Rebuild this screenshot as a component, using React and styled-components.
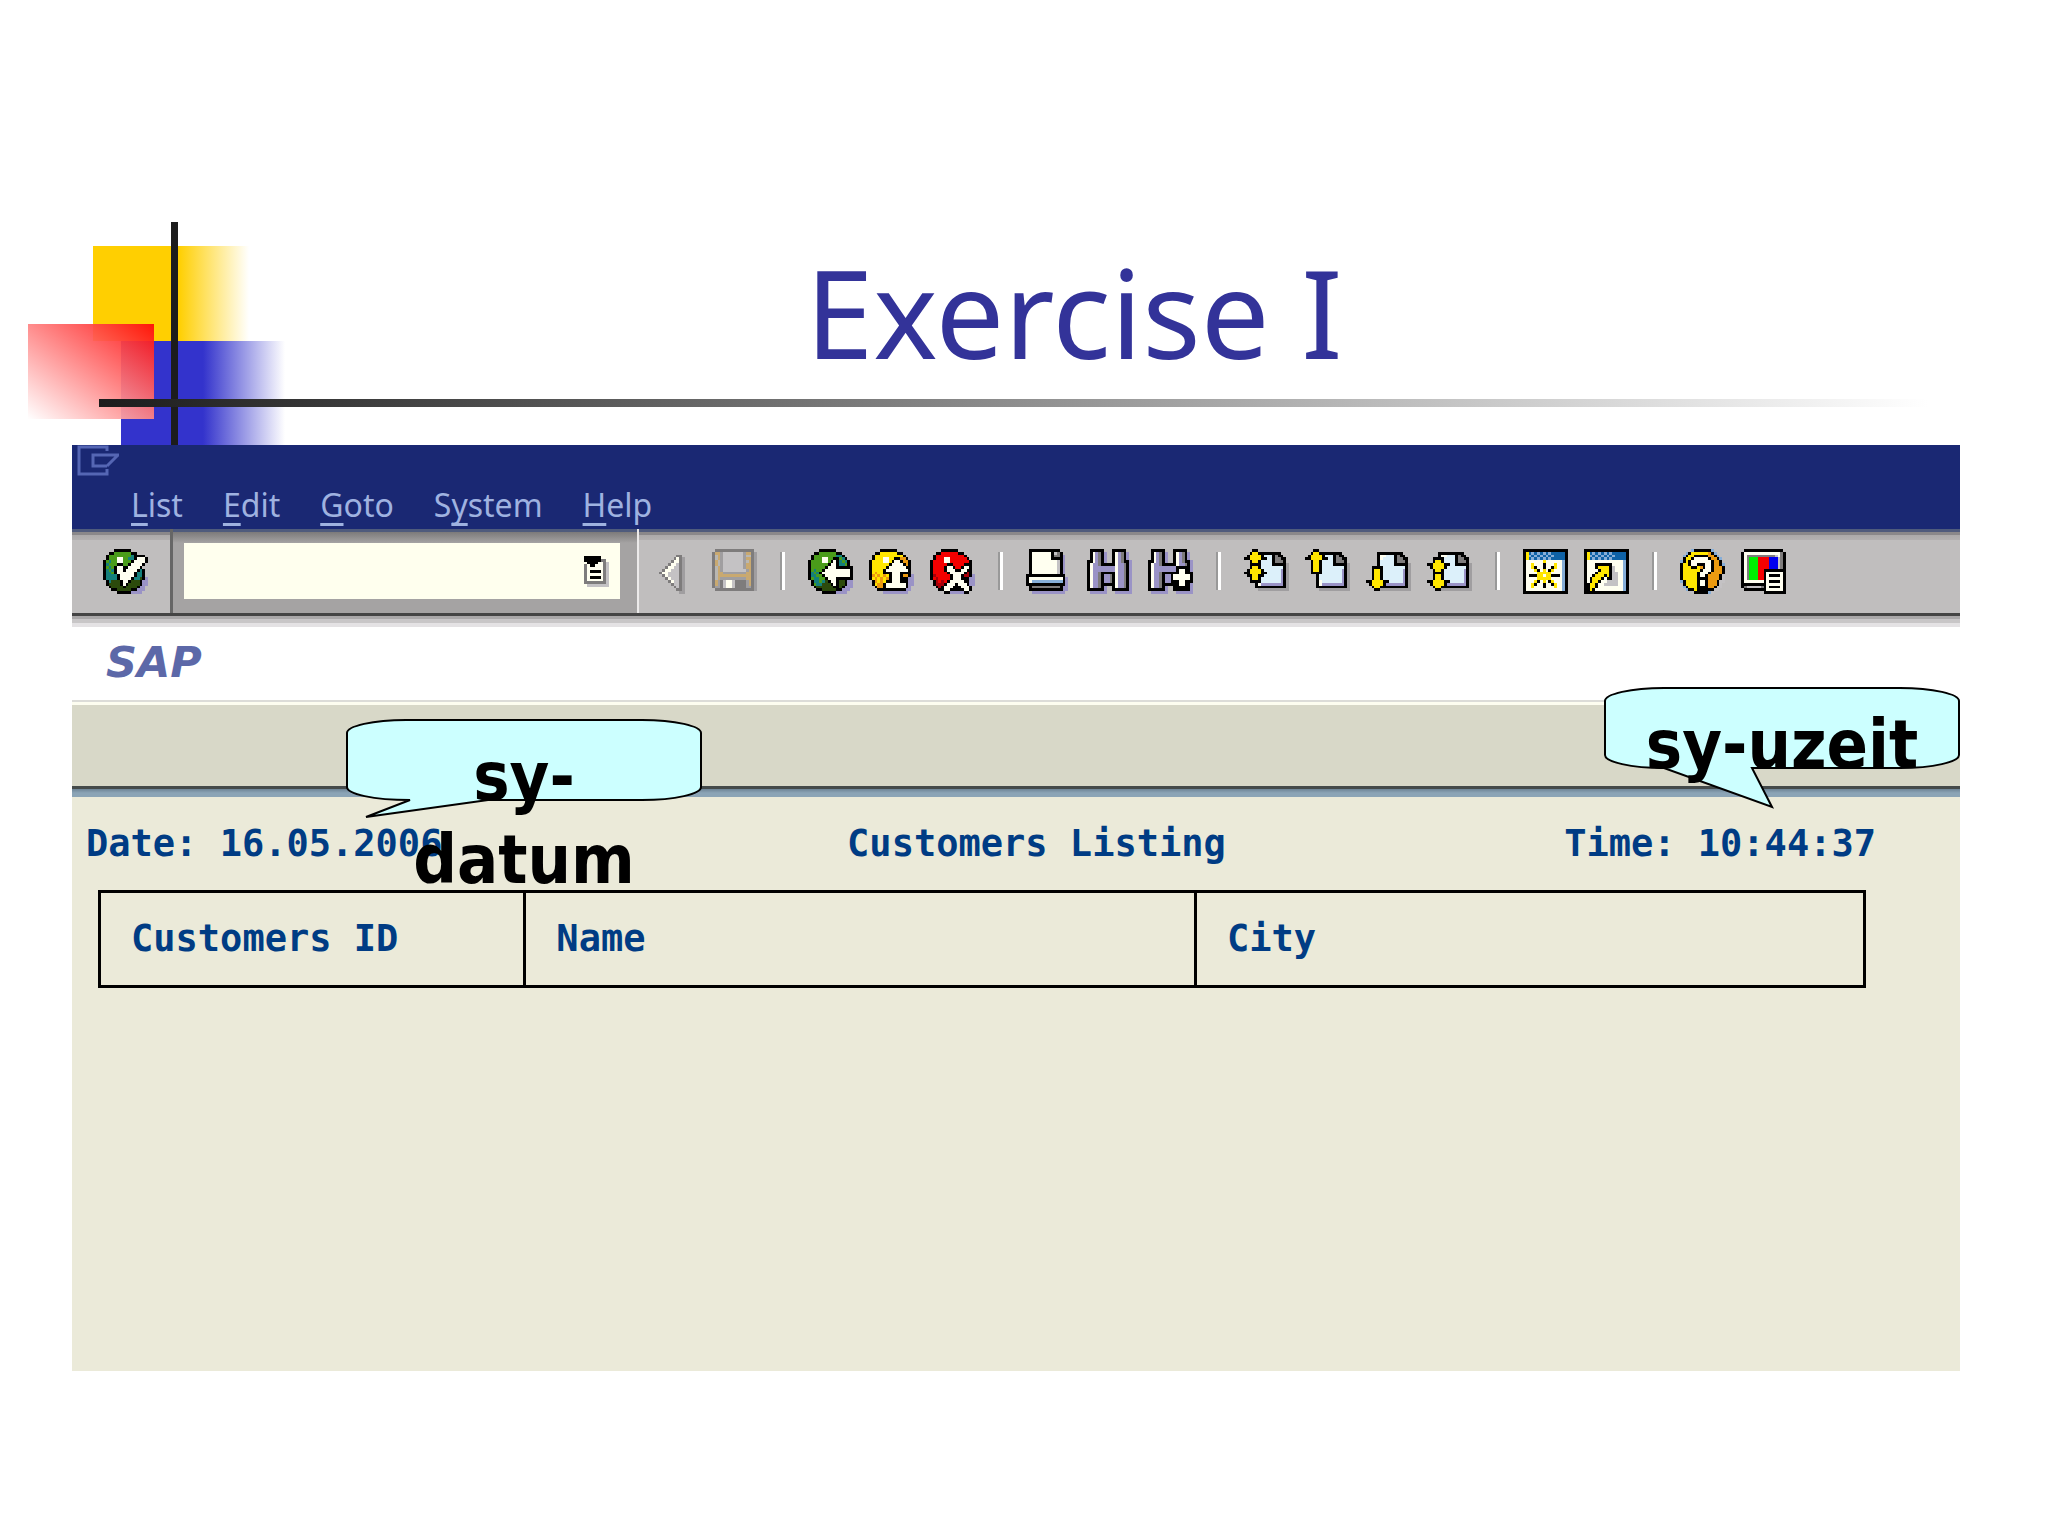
import React from "react";
import styled, { createGlobalStyle } from "styled-components";

// ------------- PIXEL ICONS -------------
// every icon is one or more layers of text rows, one letter per pixel
const palette = {
    K: "#000000",
    W: "#fffff0",
    G: "#4a9c1a",
    D: "#2c4a0c",
    T: "#14807c",
    L: "#9a93c6",
    Y: "#ffe600",
    O: "#ec9a10",
    R: "#f40000",
    r: "#a80008",
    N: "#00f000",
    U: "#0000f0",
    B: "#0f62a6",
    b: "#86aed8",
    i: "#dcf0fa",
    g: "#7e7c7c",
    s: "#c4c2c4",
    h: "#a09ea0",
    t: "#c9a970",
    e: "#b9b7b2",
};

const check = [
    "....KKKKKK......",
    "..KKGGGGGGKK....",
    ".KGGGGGGGGTKKKK.",
    ".KGGGWWGGTTKWWWK",
    "KGTGGWWGGGKWWWWK",
    "KTGGGKKGGKWWWWK.",
    "KGTGKWWKKWWWWK..",
    "KTGTKWWKWWWWKTK.",
    "KTTGKWWWWWWKTTK.",
    "KTTTTKWWWWWKTTK.",
    "KTTTTKWWWWKTTDKL",
    ".KTDDDKWWKDDDKLL",
    ".KDDDDKWKDDDDKLL",
    "..KDDDDKDDDDKLL.",
    "...KKDDDDDKKLLL.",
    ".....KKKKKLLLL..",
];

const back = [
    "....KKKKKK......",
    "..KKGGGGGGKK....",
    ".KGGGGGGGGTTK...",
    ".KGGGWWGGKKGTK..",
    "KGGGGWWGKWKTGTK.",
    "KGGGGGGKWWKTTGK.",
    "KGGGGGKWWWKKKKKK",
    "KGTGGKWWWWWWWWWK",
    "KTGTKWWWWWWWWWWK",
    "KTTGGKWWWWWWWWWK",
    "KGTTGGKWWWKKKKKK",
    ".KTTGTDKWWKDDKLL",
    ".KGTTDDDKWKDDKLL",
    "..KDDDDDDKKDKLLL",
    "...KKDDDDDKKLLL.",
    ".....KKKKKLLLL..",
];

const exit = [
    "....KKKKKK......",
    "..KKYYYYYYKK....",
    ".KYYYYYYYYYYK...",
    ".KYYYWWYYKKOOK..",
    "KYYYYWWYKWWKOOK.",
    "KYYYYYYKWWWWKOK.",
    "KYYYYYKWWWWWWKK.",
    "KYYYYKWWWWWWWWK.",
    "KYOYYKKKWWWKKKK.",
    "KOYOYOYKWWWKOOKL",
    "KYOYOYOKWWWKKKLL",
    ".KOYOYKKWWWKKKLL",
    ".KYOOKWWWWWWWKLL",
    "..KOOKWWWWWWWKL.",
    "...KKKKKKKKKKLL.",
    ".....LLLLLLLLL..",
];

const cancel = [
    "....KKKKKK......",
    "..KKRRRRRRKK....",
    ".KRRRRRRRRRRK...",
    ".KRRRWWRRRRRRK..",
    "KRRRRWWRRRRRRRK.",
    "KRRRRRKKRRRRKKK.",
    "KRRRRKWWKRRKWWK.",
    "KRRRRKWWWKKWWKK.",
    "KRRRRRKWWWWWKrK.",
    "KrRRRRRKWWWKrrKL",
    "KRrRRRRKWWWKKKLL",
    ".KrRrRKWWWWWKKLL",
    ".KrrrKWWWKWWWKLL",
    "..KrKWWWKKKWWWK.",
    "...KKWWKKKKKWWK.",
    ".....KKLLLLLKK..",
];

const triangle = [
    "................",
    "................",
    ".........gg.....",
    "........gWgh....",
    ".......gWWgh....",
    "......gWWsgh....",
    ".....gWWssgh....",
    "....gWWsssgh....",
    "...gWWssssgh....",
    "....gWssssgh....",
    ".....gWsssgh....",
    "......gWssgh....",
    ".......gssgh....",
    "........gsgh....",
    ".........ggh....",
    "..........hh....",
];

const save = [
    ".gggggggggggggg.",
    "gtthssssssshttgh",
    "gethsssssssheegh",
    "gethssssssshttgh",
    "gtehssssssshetgh",
    "gtehssssssshttgh",
    "gethssssssshttgh",
    "gethsssssssshtgh",
    "getthhhhhhhhttgh",
    "gettttttttttttgh",
    "gethhhhhhhhhttgh",
    "gthgsWWsgggghtgh",
    "gthgsWWsgggghtgh",
    "ghhgsWWsgggghhgh",
    ".ggggggggggggggh",
    "................",
];

const print = [
    ".KKKKKKKKKKK....",
    ".KWWWWWWWKsgK...",
    ".KWWWWWWWKggKL..",
    ".KWWWWWWWKKKKL..",
    ".KWWWWWWWWWsKL..",
    ".KWWWWWWWWWsKL..",
    ".KWWWWWWWWWsKL..",
    ".KWWWWWWWWWsKL..",
    ".KWWWWWWWWWsKL..",
    "KKKKKKKKKKKKKK..",
    "KWWWWWWWWWWWWKL.",
    "KWbbbbbbbbbbbKL.",
    "KKKKKKKKKKKKKKL.",
    ".KggggggggggKLL.",
    ".KKKKKKKKKKKKLL.",
    "..LLLLLLLLLLLL..",
];

const find = [
    ".KKKKK...KKKKK..",
    ".KWLgKL..KWLgKL.",
    ".KWLgKL..KWLgKL.",
    ".KWLgKL..KWLgKL.",
    "KKWLgKL..KWLgKKL",
    "KWLLgKKKKKWLLgKL",
    "KWLLLLLLLLWLLgKL",
    "KWLLLLLLLLWLLgKL",
    "KWLLgKKKKKWLLgKL",
    "KWLLgKLLgKWLLgKL",
    "KWLLgKLLgKWLLgKL",
    "KWLLgKLLgKWLLgKL",
    "KWLLgKKKKKWLLgKL",
    "KWLLgKL..KWLLgKL",
    "KKKKKKL..KKKKKKL",
    ".LLLLLL...LLLLLL",
];

const plus = [
    "", "", "", "", "", "",
    "..........KKKK..",
    "..........KWWK..",
    ".........KKWWKKK",
    "........KWWWWWWK",
    "........KWWWWWWK",
    "........KKKWWKKK",
    ".........KKWWKKL",
    ".........KKKKKKL",
];

const sheet = [
    "",
    "....KKKKKKKKK...",
    "....KWWiiiKgKK..",
    "....KWiiiiKggKK.",
    "....KiiiiiKgggK.",
    "....KiiiiiKKKKKh",
    "....KiiiiiiiiiKh",
    "....KiiiiiiiiLKh",
    "....KiiiiiiiiLKh",
    "....KiiiiiiiiLKh",
    "....KiiiiiiiiLKh",
    "....KWiiiiiiiLKh",
    "....KWLLLLLLLLKh",
    "....KKKKKKKKKKKh",
    ".....hhhhhhhhhhh",
];

const twoUp = [
    "...KK...",
    "..KYYK..",
    ".KYYYYK.",
    "KKYYYYKK",
    "..KYYK..",
    "..KKKK..",
    "..KYYK..",
    ".KYYYYK.",
    "KKYYYYKK",
    ".KKYYKK.",
    "..KYYK..",
    "..KKKK..",
];

const oneUp = [
    "...KK...",
    "..KYYK..",
    ".KYYYYK.",
    "KKYYYYKK",
    "..KYYK..",
    "..KYYK..",
    "..KYYK..",
    "..KYYK..",
    "..KKKK..",
];

const oneDown = [
    "", "", "", "", "", "",
    "..KKKK..",
    "..KYYK..",
    "..KYYK..",
    "..KYYK..",
    "..KYYK..",
    "KKYYYYKK",
    ".KYYYYK.",
    "..KYYK..",
    "...KK...",
];

const twoDown = [
    "", "", "",
    "..KKKK..",
    "..KYYK..",
    "KKYYYYKK",
    ".KYYYYK.",
    "..KYYK..",
    "..KKKK..",
    "..KYYK..",
    "..KYYK..",
    "KKYYYYKK",
    ".KYYYYK.",
    "..KYYK..",
    "...KK...",
];

const frame = [
    "KKKKKKKKKKKKKKKK",
    "KYBbBbBbBbBBBBBK",
    "KYbBbBbBbBbBBBBK",
    "KYBbBbBbBbBBBBBK",
    "KWWWWWWWWWWWWWbK",
    "KWWWWWWWWWWWWWbK",
    "KWWWWWWWWWWWWWbK",
    "KWWWWWWWWWWWWWbK",
    "KWWWWWWWWWWWWWbK",
    "KWWWWWWWWWWWWWbK",
    "KWWWWWWWWWWWWWbK",
    "KWWWWWWWWWWWWWbK",
    "KWWWWWWWWWWWWWbK",
    "KWWWWWWWWWWWWWbK",
    "KWWWWWWWWWWWWWbK",
    "KKKKKKKKKKKKKKKK",
];

const star = [
    "", "", "", "",
    ".......Y........",
    "...Y...K...Y....",
    "...YK..K..KY....",
    "....YK.Y.KY.....",
    ".....YYYYY......",
    "..KKKYY.YYKKK...",
    ".....YYYYY......",
    "....YK.Y.KY.....",
    "...YK..K..KY....",
    "...Y...K...Y....",
];

const shortcut = [
    "", "", "", "",
    "",
    "....KKKKKK......",
    "....KYYYYKs.....",
    ".....KYYYKs.....",
    "....KYYYYKss....",
    "...KYYYKYKss....",
    "..KYYYK.KKss....",
    "..KYYK..ssss....",
    ".KYYK..sssss....",
    ".KYYK...........",
    ".KYK............",
];

const help = [
    "....bKKKKKKb....",
    "..bKYYYYYYOKb...",
    ".bKYYKKKKKOOKb..",
    ".KYYKWWWWWKOOKb.",
    "bKYKWWWWWWWKOOK.",
    "KYYKWWKKKWWKOOKb",
    "KYYYKKYOKWWKOOOK",
    "KYYYYYYKWWWKOOOK",
    "KYYYYYKWWWKOOOOK",
    "KYYYYYKWWKOOOOKs",
    "KYYYYYKKKKOOOOKs",
    "bKYYYYKWWKOOOKss",
    ".KYYYYKWWKOOOKs.",
    ".bKYYYKKKKOOKss.",
    "..bKKYKKKKKKss..",
    ".....KKKKKbs....",
];

const monitor = [
    ".KKKKKKKKKKKKKK.",
    "KWWWWWWWWWWWWWgK",
    "KWggggggggggsWgK",
    "KWgNNNRRRRUUUsgK",
    "KWgNNNRRRRUUUsgK",
    "KWgNNNRRRRUUUsgK",
    "KWgNNNRRRRUUUsgK",
    "KWgNNNRRKKKKKKKK",
    "KWgNNNRRKWWWWWWK",
    "KWgNNNRRKWKKKKWK",
    "KWgNNNRRKWWWWWWK",
    "KWWWWWWWKWKKKKWK",
    "KKKKKKKKKWWWWWWK",
    "KgsssssgKWKKKKWK",
    ".KKKKKKKKWWWWWWK",
    "........KKKKKKKK",
];

const history = [
    "KKKKKK...",
    "KKKKKKgg.",
    ".KKKKWWgs",
    "gWKKWWWgs",
    "gWWWWWWgs",
    "gWKKKKWgs",
    "gWWWWWWgs",
    "gWKKKKWgs",
    "gWWWWWWgs",
    "ggggggggs",
    ".ssssssss",
];

const PixelIcon = ({ layers, width = 45, height = 45, cols = 16, rows = 16 }) => (
    <svg
        width={width}
        height={height}
        viewBox={`0 0 ${cols} ${rows}`}
        preserveAspectRatio="none"
        shapeRendering="crispEdges"
        aria-hidden="true"
    >
        {layers.map((layer, l) =>
            layer.map((row, y) =>
                [...row].map((c, x) =>
                    c === "." ? null : (
                        <rect key={`${l}-${x}-${y}`} x={x} y={y} width="1" height="1" fill={palette[c]} />
                    )
                )
            )
        )}
    </svg>
);
//---------------------------------------

const menus = [
    ["", "L", "ist"],
    ["", "E", "dit"],
    ["", "G", "oto"],
    ["S", "y", "stem"],
    ["", "H", "elp"],
];

const tools = [
    { label: "Hide command field", layers: [triangle] },
    { label: "Save", layers: [save], disabled: true },
    null,
    { label: "Back", layers: [back] },
    { label: "Exit", layers: [exit] },
    { label: "Cancel", layers: [cancel] },
    null,
    { label: "Print", layers: [print] },
    { label: "Find", layers: [find] },
    { label: "Find next", layers: [find, plus] },
    null,
    { label: "First page", layers: [sheet, twoUp] },
    { label: "Previous page", layers: [sheet, oneUp] },
    { label: "Next page", layers: [sheet, oneDown] },
    { label: "Last page", layers: [sheet, twoDown] },
    null,
    { label: "New session", layers: [frame, star] },
    { label: "Create shortcut", layers: [frame, shortcut] },
    null,
    { label: "Help", layers: [help] },
    { label: "Customize layout", layers: [monitor] },
];

// bubble outline, tail is the part of the path along the bottom edge
const Bubble = ({ tail, children, ...place }) => (
    <Callout {...place}>
        <BubbleShape viewBox="0 0 356 81" aria-hidden="true">
            <path
                d={`M1 14 C1 7 27 1 60 1 H296 C329 1 355 7 355 14 V68 C355 75 329 81 296 81 ${tail} C27 81 1 75 1 68 Z`}
                fill="#ccffff"
                stroke="#000"
                strokeWidth="2"
            />
        </BubbleShape>
        <CalloutText>{children}</CalloutText>
    </Callout>
);

const App = () => {
    return (
        <>
            <GlobalStyle />
            <Slide>
                <SlideHeader>
                    <YellowBlock />
                    <BlueBlock />
                    <RedBlock />
                    <VerticalBar />
                    <HorizontalBar />
                    <Title>Exercise I</Title>
                </SlideHeader>

                <SapWindow>
                    <TitleBar>
                        <svg width="44" height="32" viewBox="0 0 44 32" fill="none" stroke="#5566b4" strokeWidth="3" aria-hidden="true">
                            <path d="M30 6 V2 H2 V29 H30 V24" />
                            <path d="M42 10 H16 V21 H30 M41 10 L30 21" />
                        </svg>
                    </TitleBar>
                    <MenuBar>
                        {menus.map(([before, key, after]) => (
                            <MenuButton key={before + key + after}>
                                {before}<u>{key}</u>{after}
                            </MenuButton>
                        ))}
                    </MenuBar>

                    <Toolbar>
                        <EnterSection>
                            <ToolButton aria-label="Enter"><PixelIcon layers={[check]} /></ToolButton>
                        </EnterSection>
                        <CommandSection>
                            <CommandField>
                                <CommandInput type="text" aria-label="Command" />
                                <HistoryButton aria-label="Command history">
                                    <PixelIcon layers={[history]} width={25} height={31} cols={9} rows={11} />
                                </HistoryButton>
                            </CommandField>
                        </CommandSection>
                        <ToolSection>
                            {tools.map((tool, i) =>
                                tool ? (
                                    <ToolButton key={tool.label} aria-label={tool.label} disabled={tool.disabled}>
                                        <PixelIcon layers={tool.layers} />
                                    </ToolButton>
                                ) : (
                                    <Separator key={i} />
                                )
                            )}
                        </ToolSection>
                    </Toolbar>

                    <LogoRow>SAP</LogoRow>
                    <ApplicationBar />

                    <ListArea>
                        <ListHeading>
                            <span>Date: 16.05.2006</span>
                            <span>Customers Listing</span>
                            <span>Time: 10:44:37</span>
                        </ListHeading>
                        <ListTable>
                            <thead>
                                <tr>
                                    <HeadCell $width="24.1%">Customers ID</HeadCell>
                                    <HeadCell $width="38%">Name</HeadCell>
                                    <HeadCell>City</HeadCell>
                                </tr>
                            </thead>
                        </ListTable>
                    </ListArea>

                    <Bubble $top="274px" $left="274px" tail="H142 L20 98 L64 81">sy-datum</Bubble>
                    <Bubble $top="242px" $right="0" tail="H148 L168 120 L60 81">sy-uzeit</Bubble>
                </SapWindow>
            </Slide>
        </>
    );
};

//--------------------------------- STYLES ---------------------------------
const GlobalStyle = createGlobalStyle`
    * {
        box-sizing: border-box;
    }

    body {
        margin: 0;
        background: #fff;
        font-family: "Noto Sans", sans-serif;
    }

    button {
        padding: 0;
        border: 0;
        background: none;
        font: inherit;
        color: inherit;
        cursor: pointer;
    }
`

const Slide = styled.main`
    min-height: 100vh;
    background: #fff;
`

const SlideHeader = styled.header`
    position: relative;
    padding: 238px 0 59px 100px;
`

const Title = styled.h1`
    margin: 0;
    font-size: 122px;
    line-height: 148px;
    font-weight: 400;
    text-align: center;
    color: #333399;
`

//----- overlapping blocks behind the title -----
const Block = styled.div`
    position: absolute;
`

const YellowBlock = styled(Block)`
    left: 93px;
    top: 246px;
    width: 156px;
    height: 95px;
    background: linear-gradient(to right, #ffcf01 55%, #fff);
`

const BlueBlock = styled(Block)`
    left: 121px;
    top: 341px;
    width: 164px;
    bottom: 0;
    background: linear-gradient(to right, #3333cc 50%, #fff);
`

const RedBlock = styled(Block)`
    left: 28px;
    top: 324px;
    width: 126px;
    height: 95px;
    background: linear-gradient(to top right, #fff, #ff8484 50%, #ff0808);
    opacity: 0.93;
`

const VerticalBar = styled(Block)`
    left: 171px;
    top: 222px;
    width: 7px;
    bottom: 0;
    background: #1c1c1c;
`

const HorizontalBar = styled(Block)`
    left: 99px;
    right: 120px;
    top: 399px;
    height: 8px;
    background: linear-gradient(to right, #1c1c1c, #fff);
`

//----- window -----
const SapWindow = styled.section`
    position: relative;
    margin: 0 88px 0 72px;
    background: #ebead9;
`

const TitleBar = styled.div`
    height: 38px;
    padding-left: 5px;
    background: #1a2873;
`

const MenuBar = styled.nav`
    display: flex;
    gap: 40px;
    height: 46px;
    padding-left: 59px;
    background: #1a2873;
    color: #9fb2e0;
`

const MenuButton = styled.button`
    height: 44px;
    font-size: 32px;
    line-height: 44px;

    u {
        text-decoration-thickness: 3px;
        text-underline-offset: 6px;
        text-decoration-skip-ink: none;
    }
`

const Toolbar = styled.div`
    display: flex;
    height: 98px;
    padding-bottom: 14px;
    background: linear-gradient(
        #444 84px, #444 87px,
        #a9a7a8 87px, #a9a7a8 90px,
        #c8c6c7 90px, #c8c6c7 94px,
        #e4e2e4 94px
    );
`

const ToolbarSection = styled.div`
    display: flex;
    align-items: center;
    background: linear-gradient(
        #4f5b7c 3px,
        #8a888a 3px, #8a888a 6px,
        #aba9a9 6px, #b3b1b1 11px,
        #c0bebe 11px
    );
`

const EnterSection = styled(ToolbarSection)`
    padding: 0 22px 0 31px;
    border-right: 3px solid #666;
`

const CommandSection = styled(ToolbarSection)`
    padding: 0 17px 0 11px;
    border-right: 2px solid #eceaea;
    background: linear-gradient(#4f5b7c 3px, #7c7a7a 3px, #a5a3a3 14px);
`

const ToolSection = styled(ToolbarSection)`
    flex: 1;
    gap: 16px;
    padding-left: 12px;
`

const CommandField = styled.div`
    display: flex;
    align-items: center;
    width: 436px;
    height: 56px;
    padding-right: 11px;
    background: #ffffee;
`

const CommandInput = styled.input`
    flex: 1;
    min-width: 0;
    height: 100%;
    padding: 0 10px;
    border: 0;
    outline: 0;
    background: transparent;
    font-family: "Noto Sans", sans-serif;
    font-size: 32px;
`

const ToolButton = styled.button`
    flex: none;
    width: 45px;
    height: 45px;

    svg {
        display: block;
    }
`

const HistoryButton = styled(ToolButton)`
    width: 25px;
    height: 31px;
`

const Separator = styled.span`
    flex: none;
    width: 5px;
    height: 38px;
    margin: 0 7px;
    border-left: 2px solid #999;
    background: #fff;
`

const LogoRow = styled.div`
    height: 73px;
    padding-left: 34px;
    background: #fff;
    font-family: "DejaVu Sans", sans-serif;
    font-size: 43px;
    line-height: 70px;
    font-weight: 700;
    font-style: italic;
    color: #5c68a8;
`

const ApplicationBar = styled.div`
    height: 97px;
    border-top: 2px solid #dcdcd8;
    background: linear-gradient(
        #fdfdf0 3px,
        #d8d8c8 3px, #d8d8c8 84px,
        #444a4a 84px, #444a4a 87px,
        #6d8496 87px, #8ba4b6 91px
    );
`

const ListArea = styled.div`
    padding: 27px 94px 383px 26px;
    font-family: "DejaVu Sans Mono", monospace;
    font-size: 37px;
    line-height: 40px;
    font-weight: 700;
    color: #003c84;
`

const ListHeading = styled.div`
    display: grid;
    grid-template-columns: 760fr 716fr auto;
    margin: 0 -10px 26px -12px;
    white-space: nowrap;
`

const ListTable = styled.table`
    width: 100%;
    border-collapse: collapse;
    table-layout: fixed;
`

const HeadCell = styled.th`
    width: ${(props) => props.$width || "auto"};
    height: 95px;
    padding: 0 0 0 30px;
    border: 3px solid #000;
    text-align: left;
`

//----- callouts over the list -----
const Callout = styled.aside`
    position: absolute;
    top: ${(props) => props.$top};
    left: ${(props) => props.$left || "auto"};
    right: ${(props) => props.$right || "auto"};
    width: 356px;
    height: 81px;
    padding: 16px 20px 0;
`

const BubbleShape = styled.svg`
    position: absolute;
    inset: 0;
    width: 356px;
    height: 81px;
    overflow: visible;
`

const CalloutText = styled.p`
    position: relative;
    margin: 0;
    font-family: "DejaVu Sans Condensed", "Noto Sans", sans-serif;
    font-size: 68px;
    line-height: 83px;
    font-weight: 700;
    text-align: center;
    color: #000;
`

export default App;
